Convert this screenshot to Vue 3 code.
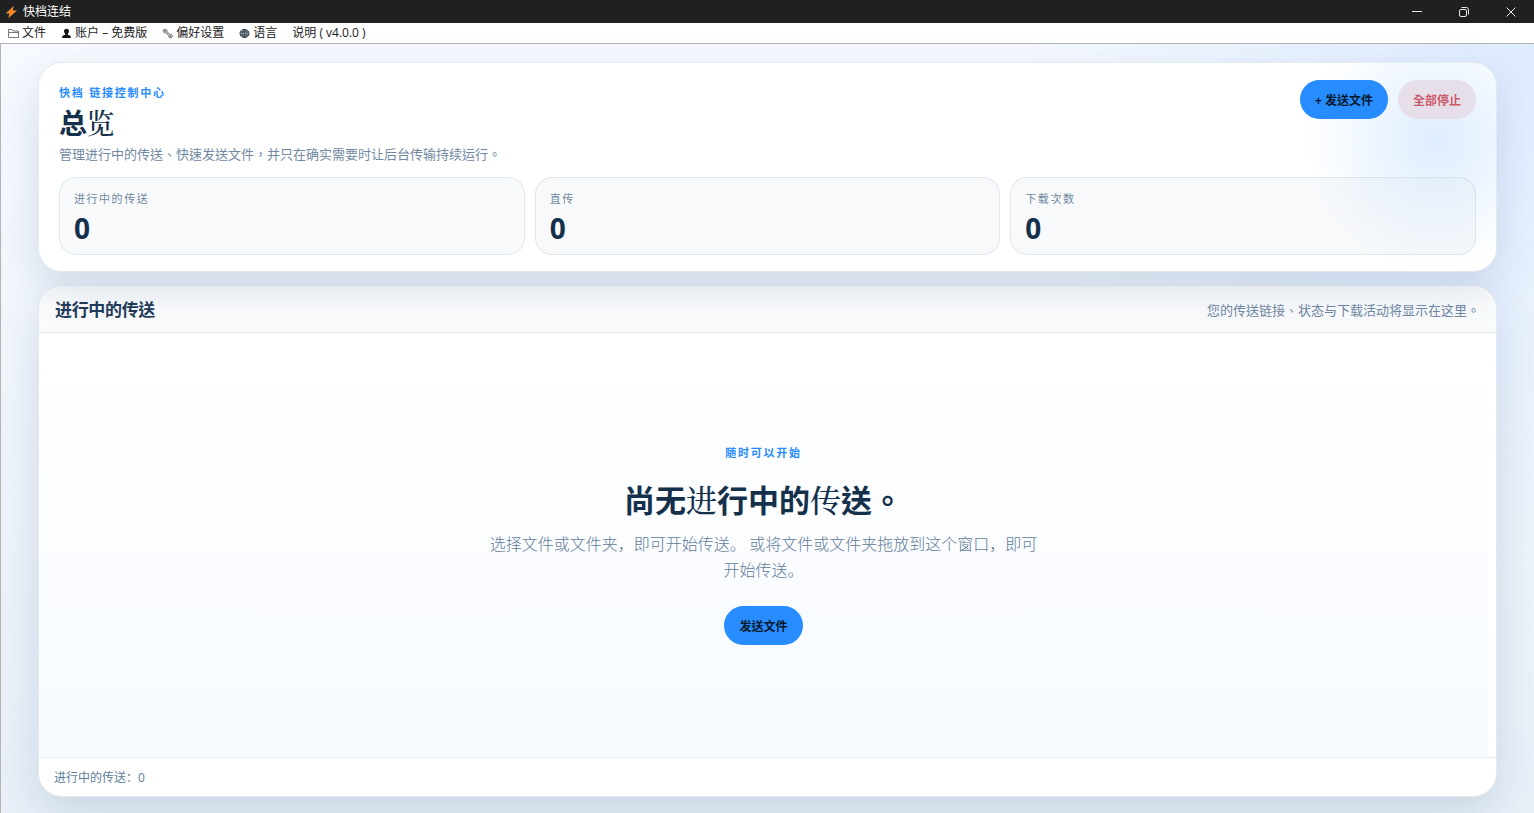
<script setup>
import { ref } from 'vue';

const menus = [
  { key: 'file', icon: 'folder', label: '文件' },
  { key: 'account', icon: 'user', label: '账户 – 免费版' },
  { key: 'preferences', icon: 'wrench', label: '偏好设置' },
  { key: 'language', icon: 'globe', label: '语言' },
  { key: 'help', icon: null, label: '说明 ( v4.0.0 )' },
];

const stats = ref([
  { key: 'active', label: '进行中的传送', value: 0 },
  { key: 'direct', label: '直传', value: 0 },
  { key: 'downloads', label: '下载次数', value: 0 },
]);
</script>

<template>
  <div class="app">
    <header class="titlebar">
      <svg class="titlebar__logo" viewBox="0 0 14 14" aria-hidden="true">
        <path d="M9.5.8 3.5 3.2.8 8.5l.6 2.3 2.4 2.4 2.6-.4 6.3-5 .5-3z" fill="#0d2830" />
        <path d="M9.8.8 1.6 8.4h3.8l-1 4.8L13 5.6H8.800z" fill="#ff8424" />
      </svg>
      <span class="titlebar__name">快档连结</span>
      <div class="titlebar__controls">
        <button type="button" class="titlebar__button" aria-label="最小化">
          <svg viewBox="0 0 12 12"><path d="M1 5.5h10" /></svg>
        </button>
        <button type="button" class="titlebar__button" aria-label="还原">
          <svg viewBox="0 0 12 12">
            <rect x="1.5" y="3.5" width="7" height="7" rx="1.5" />
            <path d="M3.5 1.5h4.8a2.2 2.2 0 0 1 2.2 2.2v4.8" />
          </svg>
        </button>
        <button type="button" class="titlebar__button" aria-label="关闭">
          <svg viewBox="0 0 12 12"><path d="m1.5 1.5 9 9m0-9-9 9" /></svg>
        </button>
      </div>
    </header>

    <nav class="menubar">
      <button v-for="menu in menus" :key="menu.key" type="button" class="menubar__item">
        <svg v-if="menu.icon === 'folder'" class="menubar__icon" viewBox="0 0 11 11">
          <path d="M.5 9.5v-8h3.6l1 1.5h5.4v6.5zM.5 4.5h10" fill="none" stroke="#777" />
        </svg>
        <svg v-else-if="menu.icon === 'user'" class="menubar__icon" viewBox="0 0 11 11">
          <path
            d="M5.5.8C3.9.8 3 1.800 3 3.300c.1 1.200.6 2 1.200 2.600v.8L2 7.600c-.6.3-.8.9-.8 2.400h8.600c0-1.500-.2-2.100-.8-2.400l-2.200-.9v-.8c.6-.6 1.100-1.400 1.200-2.600C8 1.800 7.100.8 5.500.8z"
            fill="#111"
          />
        </svg>
        <svg v-else-if="menu.icon === 'wrench'" class="menubar__icon" viewBox="0 0 11 11">
          <path
            d="M1 2.5 2.5 1l2.3.7.4 2 2.6 2.6 2 .3.7 1.7-1.3 1.8-2-.5-.6-2L4 5l-2-.4z"
            fill="#b9bdbb"
            stroke="#6b706d"
            stroke-width=".8"
          />
          <path d="m2.2 2.4 1.2 1.2m4.4 4.2 1 1" stroke="#444" />
        </svg>
        <svg v-else-if="menu.icon === 'globe'" class="menubar__icon" viewBox="0 0 11 11">
          <ellipse cx="5.5" cy="5.5" rx="4.5" ry="4" fill="#aab4c0" stroke="#2b3540" />
          <path
            d="M1.2 4h8.6M1.2 7h8.6M5.5 1.5v8M5.5 1.5c-3 2-3 6 0 8 3-2 3-6 0-8"
            fill="none"
            stroke="#2b3540"
            stroke-width=".8"
          />
        </svg>
        <span>{{ menu.label }}</span>
      </button>
    </nav>

    <main class="workspace">
      <section class="hero">
        <div class="hero__top">
          <div class="hero__intro">
            <p class="eyebrow">快档 链接控制中心</p>
            <h1 class="hero__title">总<span class="thin">览</span></h1>
            <p class="hero__text">管理进行中的传送、快速发送文件，并只在确实需要时让后台传输持续运行。</p>
          </div>
          <div class="hero__actions">
            <button type="button" class="pill pill--primary">+ 发送文件</button>
            <button type="button" class="pill pill--danger">全部停止</button>
          </div>
        </div>

        <div class="stats">
          <div v-for="stat in stats" :key="stat.key" class="stat">
            <span class="stat__label">{{ stat.label }}</span>
            <strong class="stat__value">{{ stat.value }}</strong>
          </div>
        </div>
      </section>

      <section class="panel">
        <header class="panel__header">
          <h2 class="panel__title">进行中的传送</h2>
          <p class="panel__hint">您的传送链接、状态与下载活动将显示在这里。</p>
        </header>

        <div class="panel__body">
          <div class="empty">
            <p class="eyebrow">随时可以开始</p>
            <h3 class="empty__title">
              尚无<span class="thin">进</span>行中的<span class="thin">传</span>送。
            </h3>
            <p class="empty__text" lang="zh-CN">
              选择文件或文件夹，即可开始传送。 或将文件或文件夹拖放到这个窗口，即可开始传送。
            </p>
            <button type="button" class="pill pill--primary">发送文件</button>
          </div>
        </div>

        <footer class="panel__footer" lang="zh-CN">进行中的传送：{{ stats[0].value }}</footer>
      </section>
    </main>
  </div>
</template>

<style>
body {
  margin: 0;
}
</style>

<style scoped>
.app {
  display: flex;
  flex-direction: column;
  min-height: 100vh;
  box-sizing: border-box;
  font-family: 'Open Sans', 'Noto Sans CJK TC', 'Noto Sans CJK SC', sans-serif;
  font-size: 13px;
  color: #15304b;
  background: #fff;
}

h1,
h2,
h3,
p {
  margin: 0;
}

button {
  border: 0;
  font-family: inherit;
  cursor: pointer;
}

.titlebar {
  display: flex;
  align-items: center;
  height: 23px;
  padding-left: 4px;
  background: #202020;
  color: #fff;
}

.titlebar__logo {
  width: 14px;
  height: 14px;
}

.titlebar__name {
  margin-left: 5px;
  padding-bottom: 2px;
  font-family: 'Noto Sans CJK SC', sans-serif;
  font-size: 12px;
  line-height: 18px;
}

.titlebar__controls {
  display: flex;
  margin-left: auto;
}

.titlebar__button {
  display: flex;
  align-items: center;
  justify-content: center;
  width: 47px;
  height: 23px;
  padding: 0;
  background: transparent;
}

.titlebar__button svg {
  width: 12px;
  height: 12px;
  fill: none;
  stroke: #e8e8e8;
}

.menubar {
  display: flex;
  align-items: center;
  gap: 15px;
  height: 20px;
  padding-left: 8px;
  border-bottom: 1px solid #b4b4b4;
  background: #fff;
}

.menubar__item {
  display: flex;
  align-items: center;
  gap: 3px;
  padding: 0;
  background: transparent;
  color: #222;
  font-family: 'Open Sans', 'Noto Sans CJK SC', sans-serif;
  font-size: 12px;
  line-height: 18px;
  white-space: pre;
}

.menubar__icon {
  width: 11px;
  height: 11px;
}

.workspace {
  display: flex;
  flex: 1;
  flex-direction: column;
  gap: 13px;
  padding: 18px 37px 16px;
  border-left: 1px solid #b4b4b4;
  background:
    radial-gradient(circle at 100% 0, #deebff 0, rgba(222, 235, 255, 0) 520px),
    linear-gradient(180deg, #f7faff 0, #e9f0f8 100%);
}

.hero,
.panel {
  border: 1px solid #e3eaf0;
  border-radius: 24px;
  box-shadow: 0 16px 44px rgba(40, 84, 128, 0.17);
}

.hero {
  position: relative;
  z-index: 1;
  padding: 17px 20px 16px;
  background:
    radial-gradient(circle at calc(100% - 60px) 78px, #deedff 0, rgba(222, 237, 255, 0) 130px),
    #fff;
}

.hero__top {
  display: flex;
  justify-content: space-between;
}

.hero__intro {
  padding-top: 5px;
}

.eyebrow {
  color: #268cff;
  font-size: 11px;
  font-weight: 700;
  line-height: 16px;
  letter-spacing: 0.16em;
}

.hero__title {
  margin-top: 3px;
  font-size: 28px;
  font-weight: 700;
  line-height: 36px;
  letter-spacing: -0.02em;
}

.thin {
  font-family: 'Noto Serif CJK SC', 'Noto Sans CJK SC', serif;
  font-weight: 500;
}

.hero__text {
  margin-top: 3px;
  color: #7188a2;
  line-height: 20px;
}

.hero__actions {
  display: flex;
  align-items: flex-start;
  gap: 10px;
}

.pill {
  padding: 11px 15px 9px;
  border-radius: 20px;
  font-size: 12px;
  font-weight: 700;
  line-height: 19px;
}

.pill--primary {
  background: #268cff;
  color: #061a2e;
}

.pill--danger {
  background: #e6dfe9;
  color: #cb5a69;
}

.stats {
  display: grid;
  grid-template-columns: repeat(3, 1fr);
  gap: 10px;
  margin-top: 13px;
}

.stat {
  display: flex;
  flex-direction: column;
  gap: 4px;
  padding: 13px 14px 9px;
  border: 1px solid rgba(130, 155, 180, 0.18);
  border-radius: 17px;
  background: rgba(226, 232, 240, 0.26);
}

.stat__label {
  color: #7188a2;
  font-size: 11px;
  line-height: 16px;
  letter-spacing: 0.14em;
}

.stat__value {
  font-size: 28px;
  line-height: 34px;
}

.panel {
  display: flex;
  flex: 1;
  flex-direction: column;
  overflow: hidden;
  background: #fff;
}

.panel__header {
  display: flex;
  align-items: center;
  justify-content: space-between;
  padding: 12px 16px 10px;
  border-bottom: 1px solid #e6ebf1;
  background: #fafbfc;
}

.panel__title {
  color: #223a58;
  font-size: 17px;
  font-weight: 600;
  line-height: 24px;
  letter-spacing: -0.02em;
}

.panel__hint {
  color: #7188a2;
  line-height: 20px;
}

.panel__body {
  display: flex;
  flex: 1;
  align-items: center;
  justify-content: center;
  margin-right: 8px;
  padding: 24px;
  background: linear-gradient(180deg, #fff 0, #f6faff 100%);
}

.empty {
  display: flex;
  flex-direction: column;
  align-items: center;
  max-width: 560px;
  text-align: center;
}

.empty__title {
  margin-top: 18px;
  font-size: 31px;
  font-weight: 700;
  line-height: 40px;
}

.empty__text {
  margin-top: 10px;
  color: #617b98;
  font-family: 'Noto Sans CJK SC', sans-serif;
  font-size: 16px;
  font-weight: 300;
  line-height: 26px;
}

.empty .pill {
  margin-top: 24px;
}

.panel__footer {
  padding: 10px 15px 8px;
  border-top: 1px solid #e9eef3;
  color: #607d99;
  font-family: 'Open Sans', 'Noto Sans CJK SC', sans-serif;
  font-size: 12px;
  line-height: 20px;
}
</style>
